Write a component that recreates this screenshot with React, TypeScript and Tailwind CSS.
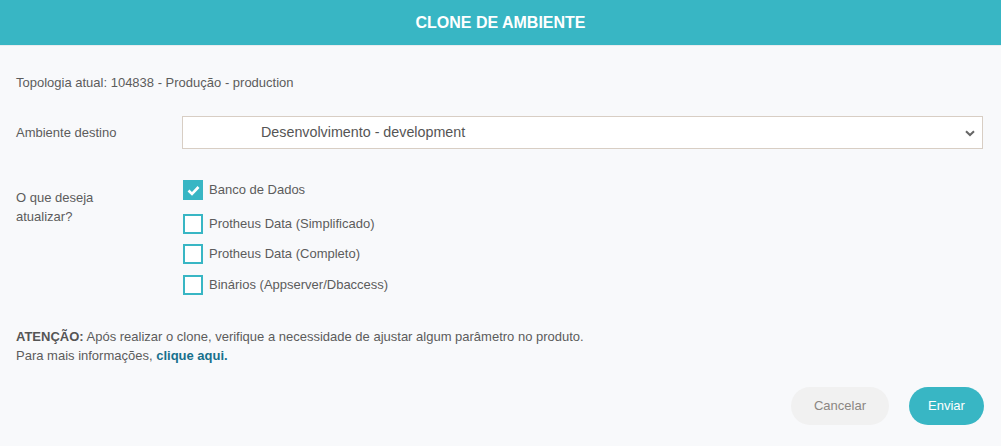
import React from "react";

const options = [
  { label: "Banco de Dados", checked: true, gap: "" },
  { label: "Protheus Data (Simplificado)", checked: false, gap: "mt-[14px]" },
  { label: "Protheus Data (Completo)", checked: false, gap: "mt-[10px]" },
  { label: "Binários (Appserver/Dbaccess)", checked: false, gap: "mt-[11px]" },
];

function CheckBox({ checked }: { checked: boolean }) {
  if (checked) {
    return (
      <span className="flex h-[20px] w-[20px] shrink-0 items-center justify-center bg-[#38b6c4]">
        <svg width="13" height="11" viewBox="0 0 13 11">
          <path d="M1.5 5.5 L5 9 L11.5 2" fill="none" stroke="#fff" strokeWidth="2.6" />
        </svg>
      </span>
    );
  }
  return <span className="block h-[20px] w-[20px] shrink-0 border-2 border-[#38b6c4] bg-white" />;
}

export default function App() {
  return (
    <div
      className="flex h-[446px] w-[1001px] flex-col bg-[#f8f9fb] text-[13px] text-[#5c5c5c]"
      style={{ fontFamily: '"Liberation Sans", Arial, sans-serif' }}
    >
      <header className="flex h-[46px] shrink-0 items-center justify-center border-b border-[#e9ecef] bg-[#38b6c4]">
        <h1 className="text-[16px] font-bold text-white">CLONE DE AMBIENTE</h1>
      </header>

      <div className="flex flex-1 flex-col pl-[16px] pr-[18px]">
        <p className="mt-[29px] leading-[16px]">Topologia atual: 104838 - Produção - production</p>

        <div className="mt-[25px] flex items-center">
          <label className="w-[166px] shrink-0 leading-[16px]">Ambiente destino</label>
          <div className="relative flex h-[33px] flex-1 items-center border border-[#d8cec4] bg-white pl-[78px]">
            <span className="text-[14.3px] text-[#555]">Desenvolvimento - development</span>
            <svg
              className="absolute right-[7px] top-[13px]"
              width="10"
              height="7"
              viewBox="0 0 10 7"
            >
              <path d="M1 1.2 L5 5 L9 1.2" fill="none" stroke="#666" strokeWidth="2" />
            </svg>
          </div>
        </div>

        <div className="mt-[31px] flex">
          <div className="w-[167px] shrink-0 pt-[8px] leading-[19px]">
            O que deseja
            <br />
            atualizar?
          </div>
          <div className="flex flex-col">
            {options.map((o) => (
              <div key={o.label} className={`flex items-center gap-[6px] ${o.gap}`}>
                <CheckBox checked={o.checked} />
                <span className="leading-[16px]">{o.label}</span>
              </div>
            ))}
          </div>
        </div>

        <div className="mt-[32px] leading-[19px]">
          <p>
            <b className="font-bold text-[#555]">ATENÇÃO:</b> Após realizar o clone, verifique a necessidade de ajustar algum parâmetro no produto.
          </p>
          <p>
            Para mais informações, <a className="font-bold text-[#17708c]">clique aqui.</a>
          </p>
        </div>

        <div className="mt-[22px] flex justify-end gap-[20px]">
          <button className="h-[38px] w-[98px] rounded-full bg-[#f1f1f1] text-[13px] text-[#8b8682]">Cancelar</button>
          <button className="mr-[-1px] h-[38px] w-[75px] rounded-full bg-[#38b6c4] text-[13px] text-white">Enviar</button>
        </div>
      </div>
    </div>
  );
}
